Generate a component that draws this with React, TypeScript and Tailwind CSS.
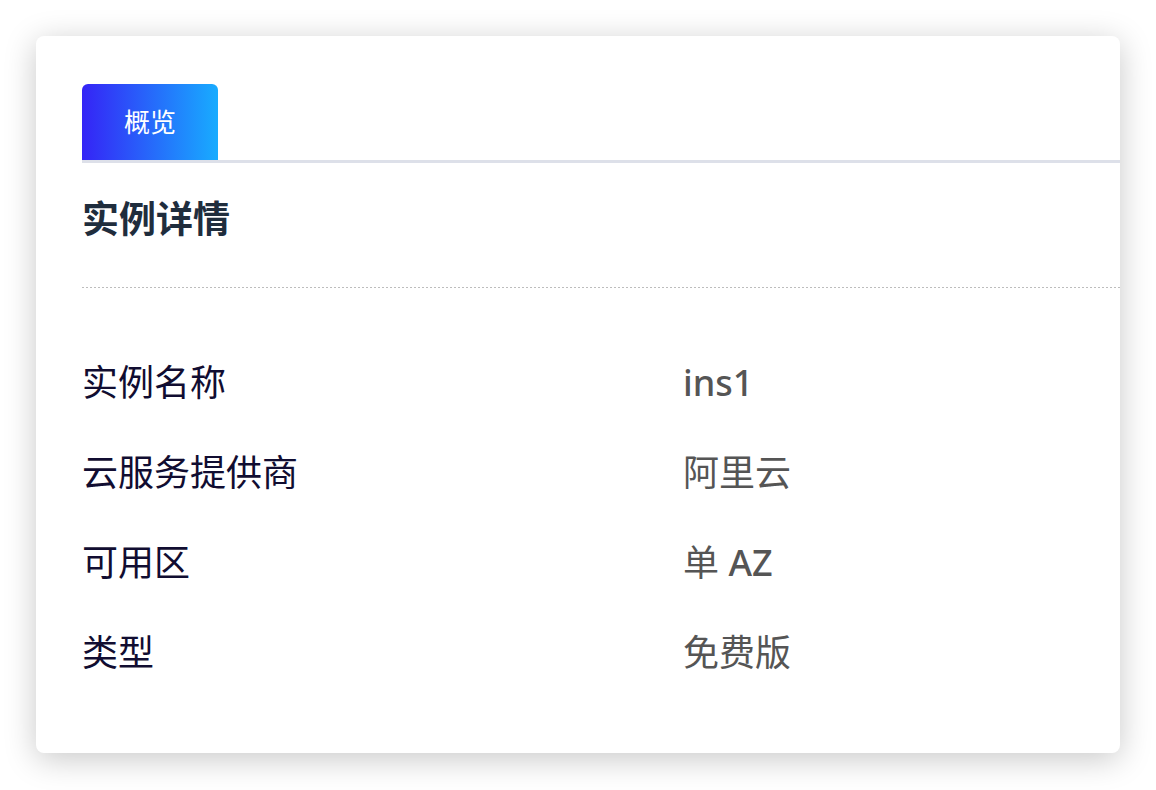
import React from 'react';

const rows: { label: string; value: React.ReactNode }[] = [
  { label: '实例名称', value: <span className="font-medium">ins1</span> },
  { label: '云服务提供商', value: '阿里云' },
  { label: '可用区', value: <>单 <span className="font-medium">AZ</span></> },
  { label: '类型', value: '免费版' },
];

const App: React.FC = () => {
  return (
    <div
      className="w-[1156px] h-[790px] bg-white pt-[36px] pl-[36px]"
      style={{ fontFamily: '"Noto Sans", "Noto Sans CJK SC", sans-serif' }}
    >
      <div className="w-[1084px] h-[717px] bg-white rounded-[8px] shadow-[0_6px_32px_rgba(0,0,0,0.22)] overflow-hidden pl-[46px] pt-[48px]">
        {/* tabs */}
        <div className="flex">
          <div className="w-[136px] h-[76px] rounded-t-[6px] bg-[linear-gradient(to_right,#3524f6,#18acff)] flex items-center justify-center text-white text-[26px]">
            概览
          </div>
        </div>
        <div className="h-[3px] bg-[#dde0e9]" />

        <div className="h-[124px] pb-[14px] flex items-center">
          <h2 className="text-[37px] font-bold text-[#1f2d3d] leading-none">实例详情</h2>
        </div>
        <div className="h-px bg-[linear-gradient(to_right,#bdbdbd_50%,transparent_50%)] bg-[length:4px_1px]" />

        <div className="pt-[50px]">
          {rows.map((r) => (
            <div key={r.label} className="h-[90px] flex items-center text-[36px] leading-none">
              <div className="w-[601px] text-[#110d31]">{r.label}</div>
              <div className="text-[#555555]">{r.value}</div>
            </div>
          ))}
        </div>
      </div>
    </div>
  );
};

export default App;
